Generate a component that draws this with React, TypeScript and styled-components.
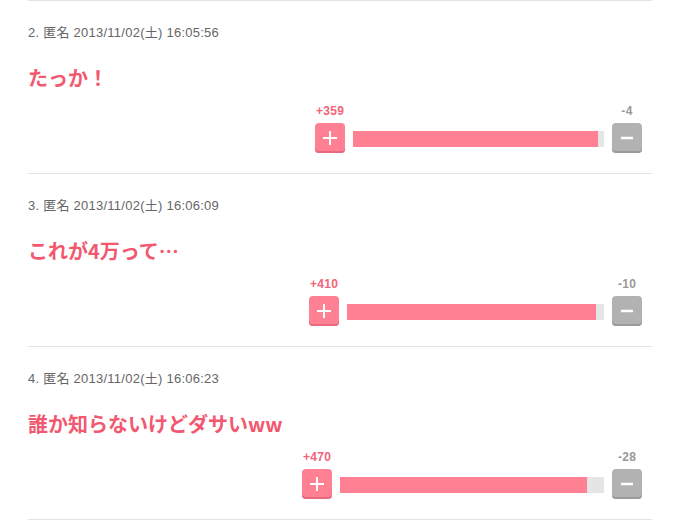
import React from "react";
import styled, { createGlobalStyle } from "styled-components";

const Global = createGlobalStyle`
  html, body { margin: 0; padding: 0; background: #fff; }
  body { font-family: "Liberation Sans", "Noto Sans CJK JP", sans-serif; }
`;

const List = styled.div`
  margin-left: 28px;
  width: 624px;
  border-top: 1px solid #e3e3e3;
`;

const Item = styled.div`
  padding: 23px 0 20px;
  border-bottom: 1px solid #e3e3e3;
`;

const Header = styled.div`
  font-size: 13px;
  line-height: 18px;
  color: #666;
  letter-spacing: 0.25px;
  font-family: "Liberation Sans", "Noto Sans CJK JP", sans-serif;
`;

const Comment = styled.div`
  margin-top: 22px;
  font-size: 20px;
  line-height: 28px;
  font-weight: 700;
  color: #f2586f;
  font-family: "Noto Sans CJK JP", "Liberation Sans", sans-serif;
`;

const VoteRow = styled.div`
  margin-top: 12px;
  display: flex;
  justify-content: flex-end;
  padding-right: 10px;
`;

const Vote = styled.div<{ $w: number }>`
  width: ${(p) => p.$w}px;
  display: grid;
  grid-template-columns: 30px 1fr 30px;
  grid-template-rows: 14px 30px;
  column-gap: 8px;
  row-gap: 5px;
`;

const Count = styled.div<{ $plus?: boolean }>`
  font-size: 12px;
  line-height: 14px;
  font-weight: 700;
  text-align: center;
  white-space: nowrap;
  letter-spacing: 0.3px;
  color: ${(p) => (p.$plus ? "#f2637a" : "#999")};
  grid-column: ${(p) => (p.$plus ? 1 : 3)};
  grid-row: 1;
  justify-self: center;
`;

const Btn = styled.div<{ $plus?: boolean }>`
  width: 30px;
  height: 30px;
  border-radius: 4px;
  display: flex;
  align-items: center;
  justify-content: center;
  padding-bottom: 1px;
  box-sizing: border-box;
  background: ${(p) => (p.$plus ? "#ff8092" : "#b2b2b2")};
  box-shadow: inset 0 -2px 0 ${(p) => (p.$plus ? "#e8687c" : "#9b9b9b")};
  grid-row: 2;
  grid-column: ${(p) => (p.$plus ? 1 : 3)};
`;

const Bar = styled.div`
  grid-row: 2;
  grid-column: 2;
  align-self: center;
  height: 16px;
  margin-top: 1px;
  background: #e5e5e5;
`;

const Fill = styled.div`
  height: 100%;
  background: #ff8092;
`;

const PlusIcon = () => (
  <svg width="14" height="14" viewBox="0 0 14 14">
    <path d="M7 0v14M0 7h14" stroke="#fff" strokeWidth="2" />
  </svg>
);

const MinusIcon = () => (
  <svg width="14" height="14" viewBox="0 0 14 14">
    <path d="M1 7h12" stroke="#fff" strokeWidth="2.5" />
  </svg>
);

const items = [
  { header: "2. 匿名 2013/11/02(土) 16:05:56", text: "たっか！", plus: 359, minus: 4, w: 327, ratio: 0.978 },
  { header: "3. 匿名 2013/11/02(土) 16:06:09", text: "これが4万って…", plus: 410, minus: 10, w: 333, ratio: 0.969 },
  { header: "4. 匿名 2013/11/02(土) 16:06:23", text: "誰か知らないけどダサいww", plus: 470, minus: 28, w: 340, ratio: 0.937 },
];

export default function App() {
  return (
    <>
      <Global />
      <List>
        {items.map((it) => (
          <Item key={it.header}>
            <Header>{it.header}</Header>
            <Comment>{it.text}</Comment>
            <VoteRow>
              <Vote $w={it.w}>
                <Count $plus>+{it.plus}</Count>
                <Count>-{it.minus}</Count>
                <Btn $plus>
                  <PlusIcon />
                </Btn>
                <Bar>
                  <Fill style={{ width: `${it.ratio * 100}%` }} />
                </Bar>
                <Btn>
                  <MinusIcon />
                </Btn>
              </Vote>
            </VoteRow>
          </Item>
        ))}
      </List>
    </>
  );
}
